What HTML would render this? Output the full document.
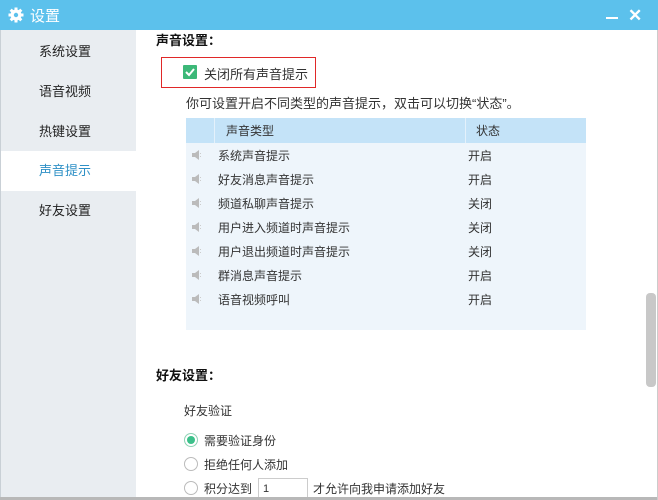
<!DOCTYPE html>
<html><head><meta charset="utf-8"><style>
*{margin:0;padding:0;box-sizing:border-box}
body{width:658px;height:500px;overflow:hidden;background:#fff;font-family:"Liberation Sans","Noto Sans CJK SC",sans-serif;font-size:12px;color:#333;position:relative}
.abs{position:absolute;white-space:nowrap}
#title{left:0;top:0;width:658px;height:30px;background:#5cc1ec}
#side{left:0;top:30px;width:136px;height:470px;background:#e9edf1;border-left:1px solid #c9d0d6}
.nav{position:absolute;left:0;width:136px;height:40px;line-height:40px;padding-left:38px;font-size:13px;color:#222}
.b{font-weight:bold;font-size:13px;color:#111}
.row{position:absolute;left:0;width:400px;height:24px;line-height:24px}
.spk{position:absolute;left:6px;top:7px;width:10px;height:10px}
.radio{position:absolute;width:14px;height:14px;border-radius:50%;border:1px solid #bbb;background:#fff}
</style></head><body>
<div id="title" class="abs">
<svg class="abs" style="left:8px;top:7px" width="16" height="16" viewBox="0 0 16 16"><g fill="#fff"><circle cx="8" cy="8" r="5.5"/><rect x="6.5" y="0.5" width="3" height="15"/><rect x="0.5" y="6.5" width="15" height="3"/><rect x="6.5" y="0.5" width="3" height="15" transform="rotate(45 8 8)"/><rect x="6.5" y="0.5" width="3" height="15" transform="rotate(-45 8 8)"/></g><circle cx="8" cy="8" r="2.2" fill="#5cc1ec"/></svg>
<div class="abs" style="left:30px;top:5px;font-size:15px;color:#fff">设置</div>
<div class="abs" style="left:606px;top:17px;width:12px;height:2px;background:#fff"></div>
<div class="abs" style="left:628px;top:6px;font-size:17px;color:#fff;font-weight:bold">✕</div>
</div>
<div id="side" class="abs">
<div class="nav" style="top:2px">系统设置</div>
<div class="nav" style="top:42px">语音视频</div>
<div class="nav" style="top:82px">热键设置</div>
<div class="nav" style="top:121px;background:#fff;color:#2e90c6">声音提示</div>
<div class="nav" style="top:161px">好友设置</div>
</div>
<div class="abs b" style="left:156px;top:30px">声音设置：</div>
<div class="abs" style="left:161px;top:57px;width:155px;height:31px;border:1px solid #e02828"></div>
<div class="abs" style="left:183px;top:65px;width:14px;height:14px;background:#3cb878;border-radius:1px"><svg width="14" height="14"><path d="M3 7l3 3 5-6" stroke="#fff" stroke-width="2" fill="none"/></svg></div>
<div class="abs" style="left:204px;top:64px;font-size:13px">关闭所有声音提示</div>
<div class="abs" style="left:186px;top:93px;font-size:13px">你可设置开启不同类型的声音提示，双击可以切换“状态”。</div>
<div class="abs" style="left:186px;top:118px;width:400px;height:212px;background:#eef5fb">
<div class="abs" style="left:0;top:0;width:400px;height:25px;background:#c4e3f8"></div>
<div class="abs" style="left:28px;top:0;width:1px;height:25px;background:#e4f1fb"></div>
<div class="abs" style="left:279px;top:0;width:1px;height:25px;background:#e4f1fb"></div>
<div class="abs" style="left:40px;top:4px;font-size:12px">声音类型</div>
<div class="abs" style="left:290px;top:4px">状态</div>
<div id="rows"></div>
</div>
<div class="abs b" style="left:156px;top:365px">好友设置：</div>
<div class="abs" style="left:184px;top:402px">好友验证</div>
<div class="radio" style="left:184px;top:433px;border-color:#8fd3b5"><div style="margin:2px;width:8px;height:8px;border-radius:50%;background:#3cc08a"></div></div>
<div class="abs" style="left:204px;top:432px">需要验证身份</div>
<div class="radio" style="left:184px;top:457px"></div>
<div class="abs" style="left:204px;top:456px">拒绝任何人添加</div>
<div class="radio" style="left:184px;top:481px"></div>
<div class="abs" style="left:204px;top:480px">积分达到</div>
<div class="abs" style="left:258px;top:478px;width:50px;height:22px;border:1px solid #ccc;padding-left:4px;line-height:20px;font-size:11px">1</div>
<div class="abs" style="left:313px;top:480px">才允许向我申请添加好友</div>
<div class="abs" style="left:646px;top:293px;width:10px;height:94px;background:#c8c8c8;border-radius:4px"></div>
<div class="abs" style="left:0;top:497px;width:658px;height:3px;background:#b8b8b8"></div>
<div class="abs" style="left:657px;top:30px;width:1px;height:470px;background:#ccc"></div>
<script>
var d=[["系统声音提示","开启"],["好友消息声音提示","开启"],["频道私聊声音提示","关闭"],["用户进入频道时声音提示","关闭"],["用户退出频道时声音提示","关闭"],["群消息声音提示","开启"],["语音视频呼叫","开启"]];
var h="";d.forEach(function(r,i){h+='<div class="row" style="top:'+(25+i*24)+'px"><svg class="spk" viewBox="0 0 10 10"><path d="M0 3h3l4-3v10l-4-3H0z" fill="#bbb"/><path d="M8.5 3v1M8.5 6v1" stroke="#ccc"/></svg><span class="abs" style="left:32px;top:1px">'+r[0]+'</span><span class="abs" style="left:282px;top:1px">'+r[1]+'</span></div>'});
document.getElementById("rows").innerHTML=h;
</script>
</body></html>
